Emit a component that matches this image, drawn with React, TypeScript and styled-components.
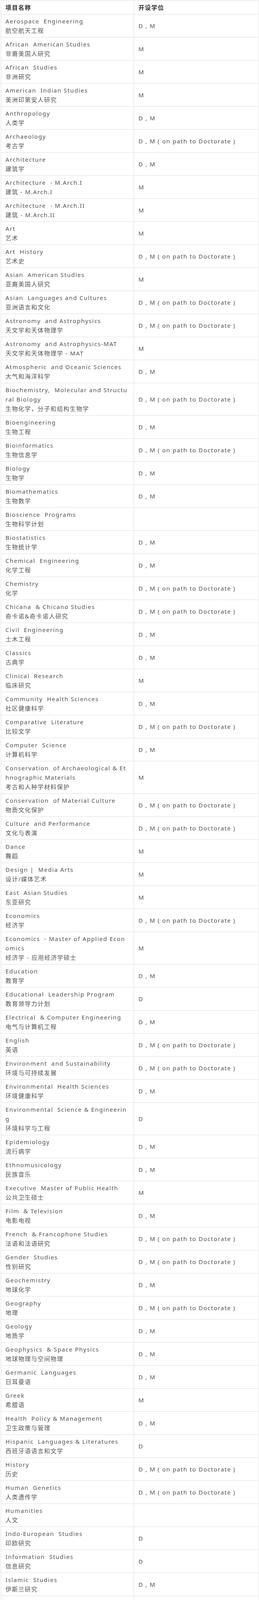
import React from 'react';
import styled, { createGlobalStyle } from 'styled-components';

const GlobalStyle = createGlobalStyle`
  html, body {
    margin: 0;
    padding: 0;
    background: #fff;
  }
  body {
    font-family: "Noto Sans", "Noto Sans CJK SC", sans-serif;
  }
`;

const Page = styled.div`
  padding: 1px 1px 1px 2px;
`;

const Table = styled.table`
  width: 661px;
  border-collapse: collapse;
  table-layout: fixed;
  font-family: "Noto Sans", "Noto Sans CJK SC", sans-serif;
  font-size: 15px;
  line-height: 24px;
  letter-spacing: 1.5px;
  color: #555;
`;

const NameCol = styled.col`
  width: 341px;
`;

const DegreeCol = styled.col`
  width: 320px;
`;

const HeadCell = styled.th`
  padding: 5px 10px 5px 11px;
  border: 1px solid #dedede;
  text-align: left;
  font-weight: 700;
  color: #333;
`;

const Cell = styled.td`
  padding: 5px 10px 5px 11px;
  border: 1px solid #dedede;
  vertical-align: middle;
`;

const Line = styled.div`
  white-space: pre;
`;

type Row = [string | string[], string, string];

const DM = 'D , M';
const DP = 'D , M ( on path to Doctorate )';

// 英文名称过长的行按原表的断行位置拆开
const rows: Row[] = [
  ['Aerospace  Engineering', '航空航天工程', DM],
  ['African  American Studies', '非裔美国人研究', 'M'],
  ['African  Studies', '非洲研究', 'M'],
  ['American  Indian Studies', '美洲印第安人研究', 'M'],
  ['Anthropology', '人类学', DM],
  ['Archaeology', '考古学', DP],
  ['Architecture', '建筑学', DM],
  ['Architecture  - M.Arch.I', '建筑 - M.Arch.I', 'M'],
  ['Architecture  - M.Arch.II', '建筑 - M.Arch.II', 'M'],
  ['Art', '艺术', 'M'],
  ['Art  History', '艺术史', DP],
  ['Asian  American Studies', '亚裔美国人研究', 'M'],
  ['Asian  Languages and Cultures', '亚洲语言和文化', DP],
  ['Astronomy  and Astrophysics', '天文学和天体物理学', DP],
  ['Astronomy  and Astrophysics-MAT', '天文学和天体物理学 - MAT', 'M'],
  ['Atmospheric  and Oceanic Sciences', '大气和海洋科学', DM],
  [['Biochemistry,  Molecular and Structu', 'ral Biology'], '生物化学，分子和结构生物学', DP],
  ['Bioengineering', '生物工程', DM],
  ['Bioinformatics', '生物信息学', DP],
  ['Biology', '生物学', DM],
  ['Biomathematics', '生物数学', DM],
  ['Bioscience  Programs', '生物科学计划', ''],
  ['Biostatistics', '生物统计学', DM],
  ['Chemical  Engineering', '化学工程', DM],
  ['Chemistry', '化学', DP],
  ['Chicana  & Chicano Studies', '奇卡诺&奇卡诺人研究', DP],
  ['Civil  Engineering', '土木工程', DM],
  ['Classics', '古典学', DM],
  ['Clinical  Research', '临床研究', 'M'],
  ['Community  Health Sciences', '社区健康科学', DM],
  ['Comparative  Literature', '比较文学', DP],
  ['Computer  Science', '计算机科学', DM],
  [['Conservation  of Archaeological & Et', 'hnographic Materials'], '考古和人种学材料保护', 'M'],
  ['Conservation  of Material Culture', '物质文化保护', DP],
  ['Culture  and Performance', '文化与表演', DP],
  ['Dance', '舞蹈', 'M'],
  ['Design |  Media Arts', '设计/媒体艺术', 'M'],
  ['East  Asian Studies', '东亚研究', 'M'],
  ['Economics', '经济学', DP],
  [['Economics  - Master of Applied Econ', 'omics'], '经济学 - 应用经济学硕士', 'M'],
  ['Education', '教育学', DM],
  ['Educational  Leadership Program', '教育领导力计划', 'D'],
  ['Electrical  & Computer Engineering', '电气与计算机工程', DM],
  ['English', '英语', DP],
  ['Environment  and Sustainability', '环境与可持续发展', DP],
  ['Environmental  Health Sciences', '环境健康科学', DM],
  [['Environmental  Science & Engineerin', 'g'], '环境科学与工程', 'D'],
  ['Epidemiology', '流行病学', DM],
  ['Ethnomusicology', '民族音乐', DM],
  ['Executive  Master of Public Health', '公共卫生硕士', 'M'],
  ['Film  & Television', '电影电视', DM],
  ['French  & Francophone Studies', '法语和法语研究', DP],
  ['Gender  Studies', '性别研究', DP],
  ['Geochemistry', '地球化学', DM],
  ['Geography', '地理', DP],
  ['Geology', '地质学', DM],
  ['Geophysics  & Space Physics', '地球物理与空间物理', DM],
  ['Germanic  Languages', '日耳曼语', DM],
  ['Greek', '希腊语', 'M'],
  ['Health  Policy & Management', '卫生政策与管理', DM],
  ['Hispanic  Languages & Literatures', '西班牙语语言和文学', 'D'],
  ['History', '历史', DP],
  ['Human  Genetics', '人类遗传学', DP],
  ['Humanities', '人文', ''],
  ['Indo-European  Studies', '印欧研究', 'D'],
  ['Information  Studies', '信息研究', 'D'],
  ['Islamic  Studies', '伊斯兰研究', DM],
  ['Italian', '意大利语', DM],
  ['Latin', '拉丁语', 'M'],
  ['Latin  American Studies', '拉丁美洲研究', 'M'],
  ['Library  & Information Science', '图书馆与信息科学', 'M'],
  ['Life  Sciences', '生命科学', ''],
  ['Linguistics', '语言学', DP],
  [['Management  - Business Analytics M', 'S'], '管理 - 业务分析MS', 'M'],
  ['Management  - Executive MBA', '管理 - 行政工商管理硕士', 'M'],
  [['Management  - Fully Employed MBA', '(FEMBA)'], '管理 - 全职MBA ( FEMBA )', 'M'],
  [['Management  - Global Executive MB', 'A for Asia Pacific'], '管理 - 亚太地区全球行政工商管理硕士', 'M'],
  [['Management  - Master of Financial E', 'ngineering'], '管理 - 金融工程硕士', 'M'],
  ['Management  - MBA', '管理 - MBA', 'M'],
  ['Management  - MS, PHD', '管理 - 硕士，博士', DP],
  ['Manufacturing  Engineering', '制造工程', 'M'],
  [['Master  of Public Health for Health P', 'rofessionals'], '卫生专业人员公共卫生硕士', 'M'],
  ['Master  of Social Science', '社会科学硕士', 'M'],
  ['Materials  Science & Engineering', '材料科学与工程', DM],
  ['Mathematics', '数学', DM],
  ['Mechanical  Engineering', '机械工业', DM],
  [['Microbiology,  Immunology, & Mole', 'cular Genetics'], '微生物学，免疫学和分子遗传学', DM],
  ['Molecular  & Medical Pharmacology', '分子与医学药理学', DP],
  ['Molecular  Biology', '分子生物学', DM],
  ['Molecular  Toxicology', '分子毒理学', 'D'],
  [['Molecular,  Cell, & Developmental Bi', 'ology'], '分子，细胞和发育生物学', DM],
  [['Molecular,  Cellular, & Integrative P', 'hysiology'], '分子，细胞和整合生理学', 'D'],
  ['Music', '音乐', DM],
  ['Musicology', '音乐学', DP],
  ['Near  Eastern Languages & Cultures', '近东语言和文化', DM],
  ['Neuroscience', '神经科学', 'D'],
  ['Nursing', '护理', DM],
  [['Nursing  - Doctor of Nursing Practic', 'e'], '　护理 - 护理实践博士', 'D'],
  ['Oral  Biology', '　口腔生物学', DM],
  ['Philosophy', '哲学', DP],
  ['Physical  Sciences', '物理科学', ''],
  ['Physics', '物理', DP],
  ['Physics  & Biology in Medicine', '医学物理与生物学', DM],
  ['Physiological  Science', '生理科学', 'M'],
  ['Political  Science', '政治学', DP],
  ['Portuguese', '葡萄牙语', 'M'],
  ['Psychology', '心理学', DP],
  ['Public  Health', '公共卫生', DM],
  ['Public  Policy', '公共政策', 'M'],
  ['Scandinavian', '斯堪的纳维亚', 'M'],
  [['Slavic,  East European, and Eurasian', 'Languages & Cultures'], '斯拉夫语，东欧语和欧亚语言和文化', DM],
  ['Social  Sciences', '社会科学', ''],
  ['Social  Welfare', '社会福利', DM],
  ['Sociology', '社会学', DP],
  ['Spanish', '西班牙语', 'M'],
  ['Special  Education', '特殊教育', 'D'],
  ['Statistics', '统计', DM],
  [['Statistics  - Master of Applied Statist', 'ics'], '统计学-应用统计学硕士', 'M'],
  ['Teaching  Asian Languages', '亚洲语言教学', 'M'],
  ['Theater', '戏剧', 'M'],
  ['Theater  and Performance Studies', '戏剧与表演研究', 'D'],
  ['Urban  and Regional Planning', '城市与区域规划', 'M'],
  ['Urban  Planning', '城市规划', 'D'],
];

const App: React.FC = () => {
  return (
    <Page>
      <GlobalStyle />
      <Table>
        <colgroup>
          <NameCol />
          <DegreeCol />
        </colgroup>
        <thead>
          <tr>
            <HeadCell>项目名称</HeadCell>
            <HeadCell>开设学位</HeadCell>
          </tr>
        </thead>
        <tbody>
          {rows.map(([en, zh, degree], i) => {
            const lines = Array.isArray(en) ? en : [en];
            return (
              <tr key={i}>
                <Cell>
                  {lines.map((l, j) => (
                    <Line key={j}>{l}</Line>
                  ))}
                  <Line>{zh}</Line>
                </Cell>
                <Cell>{degree}</Cell>
              </tr>
            );
          })}
        </tbody>
      </Table>
    </Page>
  );
};

export default App;
